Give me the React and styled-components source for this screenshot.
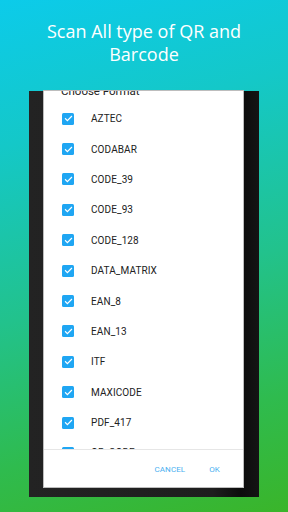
import React from "react";
import styled, { createGlobalStyle } from "styled-components";

const Global = createGlobalStyle`
  html, body { margin: 0; padding: 0; }
  body { font-family: Roboto, "Noto Sans", sans-serif; }
  #root { width: 288px; height: 512px; overflow: hidden; }
`;

const Page = styled.div`
  width: 288px;
  height: 512px;
  display: flex;
  flex-direction: column;
  align-items: center;
  background: linear-gradient(165deg, #0ccbea 0%, #14c8c8 25%, #22c28c 55%, #2fbb4e 80%, #3ab52a 100%);
  overflow: hidden;
`;

const Title = styled.h1`
  margin: 0;
  padding-top: 20px;
  height: 91px;
  box-sizing: border-box;
  width: 100%;
  text-align: center;
  color: #ffffff;
  font-family: "Open Sans", "Noto Sans", sans-serif;
  font-weight: 500;
  font-size: 18px;
  line-height: 23px;
`;

const Frame = styled.div`
  width: 230px;
  height: 406px;
  flex: none;
  box-sizing: border-box;
  padding: 0 16px 10px 15px;
  background: linear-gradient(90deg, #232323 0%, #1e1e1e 80%, #0c0c0c 92%, #141414 100%);
  display: flex;
`;

const Dialog = styled.div`
  flex: 1;
  background: #ffffff;
  display: flex;
  flex-direction: column;
  overflow: hidden;
  box-shadow: 0 0 0 1px #bdbdbd;
`;

const ListArea = styled.div`
  height: 359px;
  flex: none;
  overflow: hidden;
  border-bottom: 1px solid #e6e6e6;
  box-sizing: border-box;
`;

const Header = styled.div`
  margin-top: -7px;
  margin-bottom: 5.5px;
  height: 14px;
  line-height: 14px;
  padding-left: 17px;
  font-size: 11.5px;
  color: #222;
`;

const Row = styled.div`
  height: 30.4px;
  display: flex;
  align-items: center;
  padding-left: 18px;
  gap: 17px;
`;

const Box = styled.span`
  width: 12px;
  height: 12px;
  border-radius: 1.5px;
  background: #1fa6f3;
  display: flex;
  align-items: center;
  justify-content: center;
  flex: none;
`;

const Label = styled.span`
  font-size: 10px;
  color: #222;
  letter-spacing: 0.1px;
`;

const Footer = styled.div`
  flex: 1;
  display: flex;
  justify-content: flex-end;
  align-items: center;
  padding-right: 23px;
  gap: 24px;
`;

const Btn = styled.button`
  border: none;
  background: none;
  padding: 0;
  margin: 0;
  font-family: Roboto, sans-serif;
  font-size: 8px;
  color: #4aaff0;
  letter-spacing: 0.1px;
  margin-top: 1px;
`;

const Check = () => (
  <svg width="9" height="9" viewBox="0 0 24 24">
    <path d="M4 12.5l5 5L20 6.5" fill="none" stroke="#fff" strokeWidth="3.2" strokeLinecap="square" />
  </svg>
);

const formats = [
  "AZTEC",
  "CODABAR",
  "CODE_39",
  "CODE_93",
  "CODE_128",
  "DATA_MATRIX",
  "EAN_8",
  "EAN_13",
  "ITF",
  "MAXICODE",
  "PDF_417",
  "QR_CODE",
];

export default function App() {
  return (
    <>
      <Global />
      <Page>
        <Title>
          Scan All type of QR and
          <br />
          Barcode
        </Title>
        <Frame>
          <Dialog>
            <ListArea>
              <Header>Choose Format</Header>
              {formats.map((f) => (
                <Row key={f}>
                  <Box>
                    <Check />
                  </Box>
                  <Label>{f}</Label>
                </Row>
              ))}
            </ListArea>
            <Footer>
              <Btn>CANCEL</Btn>
              <Btn>OK</Btn>
            </Footer>
          </Dialog>
        </Frame>
      </Page>
    </>
  );
}
